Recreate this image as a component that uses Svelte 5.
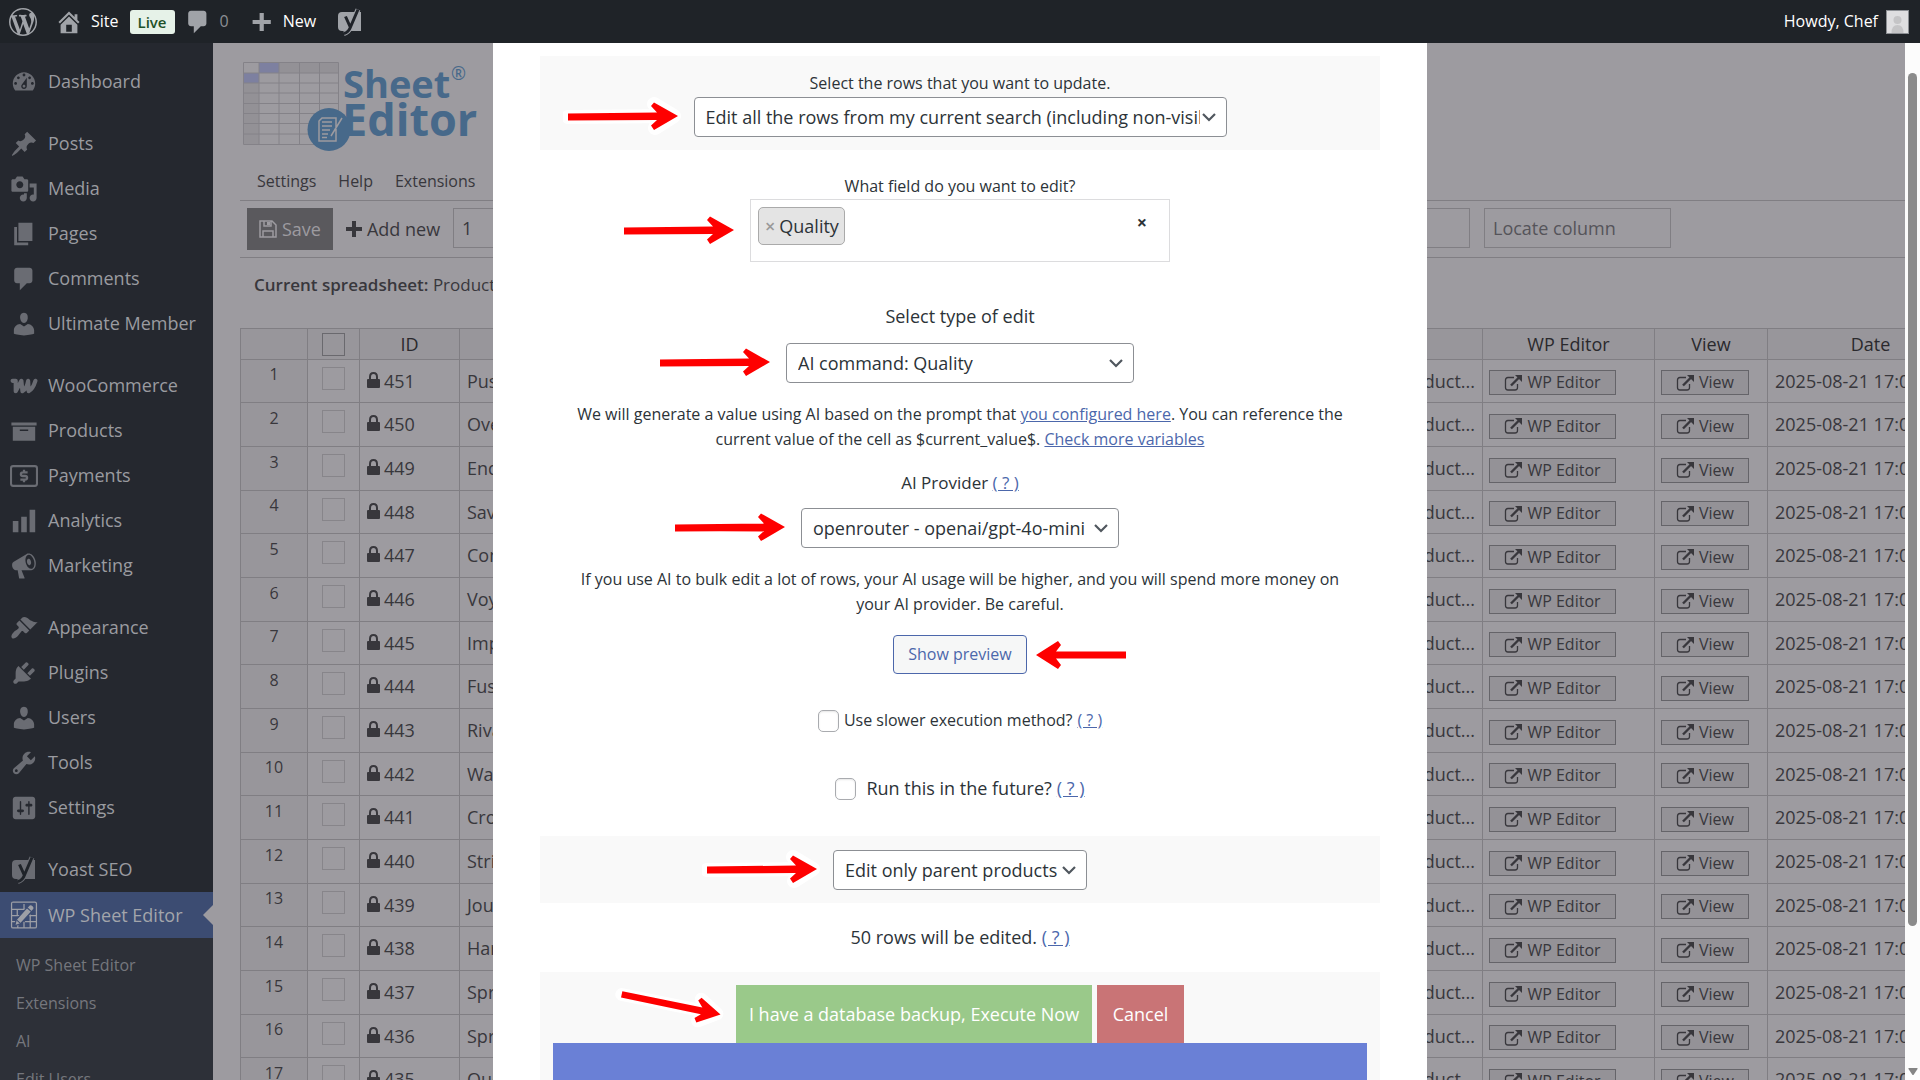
<script lang="ts">
	const icons: Record<string, string> = {
		wordpress:
			'M20 10c0-5.51-4.49-10-10-10C4.48 0 0 4.49 0 10c0 5.52 4.48 10 10 10 5.51 0 10-4.48 10-10zM7.78 15.37L4.37 6.22c.55-.02 1.17-.08 1.17-.08.5-.06.44-1.13-.06-1.11 0 0-1.45.11-2.37.11-.18 0-.37 0-.58-.01C4.12 2.69 6.87 1.11 10 1.11c2.33 0 4.45.87 6.05 2.34-.68-.11-1.65.39-1.65 1.58 0 .74.45 1.36.9 2.1.35.61.55 1.36.55 2.46 0 1.49-1.4 5-1.4 5l-3.03-8.37c.54-.02.82-.17.82-.17.5-.05.44-1.25-.06-1.22 0 0-1.44.12-2.38.12-.87 0-2.33-.12-2.33-.12-.5-.03-.56 1.2-.06 1.22l.92.08 1.26 3.41zM17.41 10c.24-.64.74-1.87.43-4.25.7 1.29 1.05 2.71 1.05 4.25 0 3.29-1.73 6.24-4.4 7.78.97-2.59 1.94-5.2 2.92-7.78zM6.1 18.09C3.12 16.65 1.11 13.53 1.11 10c0-1.3.23-2.48.72-3.59C3.25 10.3 4.67 14.2 6.1 18.09zm4.03-6.63l2.58 6.98c-.86.29-1.76.45-2.71.45-.79 0-1.57-.11-2.29-.33.81-2.38 1.62-4.74 2.42-7.1z',
		home: 'M16 8.5l1.53 1.53-1.06 1.06L10 4.6l-6.47 6.49-1.06-1.06L10 2.5l4 4v-2h2v4zm-6-2.46l6 5.99V18H4v-5.97zM12 17v-5H8v5h4z',
		plus: 'M17 8.500v3h-5v5H9v-5H4V8.500h5V3.500h3v5h5z',
		dashboard:
			'M3.76 16h12.48c1.1-1.37 1.76-3.11 1.76-5 0-4.42-3.58-8-8-8s-8 3.58-8 8c0 1.89.66 3.63 1.76 5zM10 4c.55 0 1 .45 1 1s-.45 1-1 1-1-.45-1-1 .45-1 1-1zM6 6c.55 0 1 .45 1 1s-.45 1-1 1-1-.45-1-1 .45-1 1-1zm8 0c.55 0 1 .45 1 1s-.45 1-1 1-1-.45-1-1 .45-1 1-1zm-5.37 5.55L12 7v6c0 1.1-.9 2-2 2s-2-.9-2-2c0-.57.24-1.08.63-1.45zM4 10c.55 0 1 .45 1 1s-.45 1-1 1-1-.45-1-1 .45-1 1-1zm12 0c.55 0 1 .45 1 1s-.45 1-1 1-1-.45-1-1 .45-1 1-1zm-5 3c0-.55-.45-1-1-1s-1 .45-1 1 .45 1 1 1 1-.45 1-1z',
		pin: 'M10.44 3.02l1.82-1.82 6.36 6.35-1.83 1.82c-1.05-.68-2.48-.57-3.41.36l-.75.75c-.92.93-1.04 2.35-.35 3.41l-1.83 1.82-2.41-2.41-2.8 2.79c-.42.42-3.38 2.71-3.8 2.29s1.86-3.39 2.28-3.81l2.79-2.79L4.1 9.36l1.83-1.82c1.05.69 2.48.57 3.4-.36l.75-.75c.93-.92 1.05-2.35.36-3.41z',
		media:
			'M13 11V4c0-.55-.45-1-1-1h-1.67L9 1H5L3.67 3H2c-.55 0-1 .45-1 1v7c0 .55.45 1 1 1h10c.55 0 1-.45 1-1zM7 4.5c1.38 0 2.5 1.12 2.5 2.5S8.38 9.5 7 9.5 4.5 8.38 4.5 7 5.62 4.5 7 4.5zM14 6h5v10.5c0 1.38-1.12 2.5-2.5 2.5S14 17.88 14 16.5s1.12-2.5 2.5-2.5c.17 0 .34.02.5.05V9h-3V6zm-4 8.05V13h2v3.5c0 1.38-1.12 2.5-2.5 2.5S7 17.88 7 16.5 8.12 14 9.5 14c.17 0 .34.02.5.05z',
		page: 'M6 15V2h10v13H6zm-1 1h8v2H3V5h2v11z',
		comment: 'M5 2h9c1.1 0 2 .9 2 2v7c0 1.1-.9 2-2 2h-2l-5 5v-5H5c-1.1 0-2-.9-2-2V4c0-1.1.9-2 2-2z',
		user: 'M10 9.25c-2.27 0-2.73-3.44-2.73-3.44C7 4.02 7.82 2 9.97 2c2.16 0 2.98 2.02 2.71 3.81 0 0-.41 3.44-2.68 3.44zm0 2.57L12.72 10c2.39 0 4.52 2.33 4.52 4.53v2.49s-3.65 1.13-7.24 1.13c-3.65 0-7.24-1.13-7.24-1.13v-2.49c0-2.25 1.94-4.48 4.47-4.48z',
		archive: 'M19 4v2H1V4h18zM2 7h16v10H2V7zm11 3V9H7v1h6z',
		chart: 'M18 18V2h-4v16h4zm-6 0V7H8v11h4zm-6 0v-8H2v8h4z',
		megaphone:
			'M18.15 5.94c.46 1.62.38 3.22-.02 4.48-.42 1.28-1.26 2.18-2.3 2.48-.16.06-.26.06-.4.06-.06.02-.12.02-.18.02-.06.02-.14.02-.22.02h-6.8l2.22 5.5c.02.14-.06.26-.14.34-.08.1-.24.16-.34.16H6.95c-.1 0-.26-.06-.34-.16-.08-.08-.16-.2-.14-.34l-1-5.5H4.25l-.02-.02c-.5.06-1.08-.18-1.54-.62s-.88-1.08-1.06-1.88c-.24-.8-.2-1.56-.02-2.2.18-.62.58-1.08 1.06-1.3l.02-.02 9-5.4c.1-.06.18-.1.24-.16.06-.04.14-.08.24-.12.16-.08.28-.12.5-.18 1.04-.3 2.24.1 3.22.98s1.84 2.24 2.26 3.86zm-2.58 5.98h-.02c.4-.1.74-.34 1.04-.7.58-.7.86-1.76.86-3.04 0-.64-.1-1.3-.28-1.98-.34-1.36-1.02-2.5-1.78-3.24s-1.68-1.1-2.46-.88c-.82.22-1.4.96-1.7 2-.32 1.04-.28 2.36.06 3.72.38 1.36 1 2.5 1.8 3.24.78.74 1.62 1.1 2.48.88zm-2.54-7.08c.22-.04.42-.02.62.04.38.16.76.48 1.02 1s.42 1.2.42 1.78c0 .3-.04.56-.12.8-.18.48-.44.84-.86.94-.34.1-.8-.06-1.14-.4s-.64-.86-.78-1.5c-.18-.62-.12-1.24.02-1.72s.48-.84.82-.94z',
		brush:
			'M14.48 11.06L7.41 3.99l1.5-1.5c.5-.56 2.3-.47 3.51.32 1.21.8 1.43 1.28 2.91 2.1 1.18.64 2.45 1.26 4.45.85zm-.71.71L6.7 4.7 4.93 6.47c-.39.39-.39 1.02 0 1.41l1.06 1.06c.39.39.39 1.03 0 1.42-.6.6-1.43 1.11-2.21 1.69-.35.26-.7.53-1.01.84C1.43 14.23.4 16.08 1.4 17.07c.99 1 2.84-.03 4.18-1.36.31-.31.58-.66.85-1.02.57-.78 1.08-1.61 1.69-2.21.39-.39 1.02-.39 1.41 0l1.06 1.06c.39.39 1.02.39 1.41 0z',
		plug: 'M13.11 4.36L9.87 7.6 8 5.73l3.24-3.24c.35-.34 1.05-.2 1.56.32.52.51.66 1.21.31 1.55zm-8 1.77l.91-1.12 9.01 9.01-1.19.84c-.71.71-2.63 1.16-3.82 1.16H6.14L4.9 17.26c-.59.59-1.54.59-2.12 0-.59-.58-.59-1.53 0-2.12l1.24-1.24v-3.88c0-1.13.4-3.19 1.09-3.89zm7.26 3.97l3.24-3.24c.34-.35 1.04-.21 1.55.31.52.51.66 1.21.31 1.55l-3.24 3.25z',
		wrench:
			'M16.68 9.77c-1.34 1.34-3.3 1.67-4.95.99l-5.41 6.52c-.99.99-2.59.99-3.58 0s-.99-2.59 0-3.57l6.52-5.42c-.68-1.65-.35-3.61.99-4.95 1.28-1.28 3.12-1.62 4.72-1.06l-2.89 2.89 2.82 2.82 2.86-2.87c.53 1.58.18 3.39-1.08 4.65zM3.81 16.21c.4.39 1.04.39 1.43 0 .4-.4.4-1.04 0-1.43-.39-.4-1.03-.4-1.43 0-.39.39-.39 1.03 0 1.43z',
		sliders:
			'M18 16V4c0-1.1-.9-2-2-2H4c-1.1 0-2 .9-2 2v12c0 1.1.9 2 2 2h12c1.1 0 2-.9 2-2zM8 11h1c.55 0 1 .45 1 1s-.45 1-1 1H8v1.5c0 .28-.22.5-.5.5s-.5-.22-.5-.5V13H6c-.55 0-1-.45-1-1s.45-1 1-1h1V5.5c0-.28.22-.5.5-.5s.5.22.5.5V11zm5-2h-1c-.55 0-1-.45-1-1s.45-1 1-1h1V5.5c0-.28.22-.5.5-.5s.5.22.5.5V7h1c.55 0 1 .45 1 1s-.45 1-1 1h-1v5.5c0 .28-.22.5-.5.5s-.5-.22-.5-.5V9z'
	};

	// Sidebar menu, split where WordPress puts its separators
	const menu = [
		[{ label: 'Dashboard', icon: 'dashboard' }],
		[
			{ label: 'Posts', icon: 'pin' },
			{ label: 'Media', icon: 'media' },
			{ label: 'Pages', icon: 'page' },
			{ label: 'Comments', icon: 'comment' },
			{ label: 'Ultimate Member', icon: 'user' }
		],
		[
			{ label: 'WooCommerce', icon: 'woo' },
			{ label: 'Products', icon: 'archive' },
			{ label: 'Payments', icon: 'dollar' },
			{ label: 'Analytics', icon: 'chart' },
			{ label: 'Marketing', icon: 'megaphone' }
		],
		[
			{ label: 'Appearance', icon: 'brush' },
			{ label: 'Plugins', icon: 'plug' },
			{ label: 'Users', icon: 'user' },
			{ label: 'Tools', icon: 'wrench' },
			{ label: 'Settings', icon: 'sliders' }
		],
		[
			{ label: 'Yoast SEO', icon: 'yoast' },
			{ label: 'WP Sheet Editor', icon: 'sheet', current: true }
		]
	];
	const submenu = ['WP Sheet Editor', 'Extensions', 'AI', 'Edit Users'];

	const titles = [
		'Push It Messenger Bag',
		'Overnight Duffle',
		'Endeavor Daytrip Backpack',
		'Savvy Shoulder Tote',
		'Compete Track Tote',
		'Voyage Yoga Bag',
		'Impulse Duffle',
		'Fusion Backpack',
		'Rival Field Messenger',
		'Wayfarer Messenger Bag',
		'Crown Summit Backpack',
		'Strive Shoulder Pack',
		'Joust Duffle Bag',
		'Harmony Strength Kit',
		'Sprite Stasis Ball',
		'Sprite Foam Roller',
		'Quest Lumaflex Band'
	];
	const rows = titles.map((title, i) => ({ id: 451 - i, title }));

	let slower = $state(false);
	let future = $state(false);
</script>

{#snippet icon(name: string)}
	{#if name === 'yoast'}
		<svg class="icon yoast" viewBox="0 0 24 28" aria-hidden="true">
			<path fill="currentColor" d="M4 4h19v19H4a4 4 0 0 1-4-4V8a4 4 0 0 1 4-4z" />
			<path class="y-edge" d="M20 1.500L12.500 19Q10.500 24.500 6 25.500" />
			<path class="y-ink" d="M20 1.500L12.500 19Q10.500 24.500 6 25.500M7.500 8.500L12 18.500" />
		</svg>
	{:else if name === 'woo'}
		<svg class="icon" viewBox="0 0 27 18" aria-hidden="true">
			<path
				d="M2.500 4H5.500L5.500 14L11 4L12 14Q16 12 17.500 4L18 14Q22 12 24.500 4"
				fill="none"
				stroke="currentColor"
				stroke-width="4"
				stroke-linejoin="round"
				stroke-linecap="round"
			/>
		</svg>
	{:else if name === 'dollar'}
		<svg class="icon" viewBox="0 0 27 21" aria-hidden="true">
			<rect x="1" y="1" width="25" height="19" rx="2" fill="none" stroke="currentColor" stroke-width="2" />
			<path
				d="M17 7H12.500Q10.500 7 10.500 8.700T12.500 10.500H14.500Q16.500 10.500 16.500 12.300T14.500 14H10M13.500 4.500V7M13.500 14V16.500"
				fill="none"
				stroke="currentColor"
				stroke-width="2.200"
			/>
		</svg>
	{:else if name === 'sheet'}
		<svg class="icon" viewBox="0 0 26 27" aria-hidden="true">
			<path
				d="M2.500 1h21q1.500 0 1.500 1.500v22q0 1.500-1.500 1.500h-21Q1 26 1 24.500v-22Q1 1 2.500 1zM1 8h16M1 14h10M18 14h7M1 20h6M14 20h11M6.500 8v6M13 20v6M19 13v13M7 22v4M13 3v5"
				fill="none"
				stroke="currentColor"
				stroke-width="1.200"
			/>
			<path d="M4 24L5.500 18L18 4Q19.500 2.500 21.500 4.500T22.500 8L9.500 22z" fill="currentColor" stroke="#3c4c72" stroke-width="1.200" />
			<path d="M16 6.500L20.500 10.500M6 18.500L9.500 21.500" stroke="#3c4c72" />
		</svg>
	{:else}
		<svg class="icon" viewBox="0 0 20 20" aria-hidden="true">
			<path d={icons[name]} fill="currentColor" fill-rule="evenodd" />
		</svg>
	{/if}
{/snippet}

{#snippet external()}
	<svg class="external" viewBox="0 0 18 16" aria-hidden="true">
		<path d="M10 2.500H4Q1.500 2.500 1.500 5v7.500Q1.500 15 4 15h7q2.500 0 2.500-2.500V9" fill="none" stroke="currentColor" stroke-width="1.300" />
		<path d="M7 10.500L15 2.500" stroke="currentColor" stroke-width="2.400" />
		<path d="M11 0h7v7z" fill="currentColor" />
	</svg>
{/snippet}

{#snippet chevron()}
	<svg class="chevron" viewBox="0 0 14 9" aria-hidden="true">
		<path d="M1 1l6 6 6-6" fill="none" stroke="#50575e" stroke-width="2.200" />
	</svg>
{/snippet}

<!-- Red pointers, kept next to the control that they point at -->
{#snippet pointer(kind = 'right')}
	<svg class="pointer {kind}" viewBox="0 0 120 40" aria-hidden="true">
		<g class="halo">
			<path d={kind === 'left' ? 'M95 20H10M26 9L9 20L26 31' : 'M5 21L109 20M91 8L111 20L92 32'} />
		</g>
		{#if kind === 'left'}
			<path d="M97 16.500V23.500H27L32 30L29 34L7 20L29 6L32 10L27 16.500z" fill="#fe0000" />
		{:else}
			<path d="M5 17.500L94 16.500L88 10L91 6.500L115 20L91 34L88 29.500L94 24L5 24.500z" fill="#fe0000" />
		{/if}
	</svg>
{/snippet}

<div class="screen">
	<header class="adminbar">
		<a href="#about" aria-label="About WordPress">{@render icon('wordpress')}</a>
		<a href="#site" class="site">{@render icon('home')}Site</a>
		<span class="live">Live</span>
		<a href="#comments" class="count">{@render icon('comment')}0</a>
		<a href="#new" class="new">{@render icon('plus')}New</a>
		<a href="#yoast" aria-label="Yoast SEO">{@render icon('yoast')}</a>
		<a href="#profile" class="howdy">
			Howdy, Chef
			<svg viewBox="0 0 23 24" aria-hidden="true">
				<rect x=".5" y=".5" width="22" height="23" fill="#dedee0" stroke="#8c8f94" />
				<circle cx="11.500" cy="10" r="4" fill="#c4c4c6" />
				<path d="M5.500 23q0-8 6-8t6 8z" fill="#c4c4c6" />
			</svg>
		</a>
	</header>

	<div class="workspace">
		<nav class="sidebar">
			{#each menu as group, g (g)}
				<ul>
					{#each group as item (item.label)}
						<li>
							<a href="#menu" class:current={'current' in item}>
								{@render icon(item.icon)}{item.label}
							</a>
						</li>
					{/each}
				</ul>
			{/each}
			<ul class="submenu">
				{#each submenu as label (label)}
					<li><a href="#submenu">{label}</a></li>
				{/each}
			</ul>
		</nav>

		<main class="sheet">
			<svg class="logo" viewBox="0 0 240 90" role="img" aria-label="Sheet Editor">
				<rect x="1" y="1" width="95" height="10" fill="#939196" />
				<rect x="1" y="1" width="15" height="81" fill="#939196" />
				<rect x="1" y="1" width="15" height="10" fill="#9d9ba0" />
				<rect x="16" y="1" width="20" height="10" fill="#7d80a0" />
				<rect x="1" y="11" width="15" height="10" fill="#7d80a0" />
				<path
					d="M.5.5h95v82H.5zM.5 11h95M.5 21h95M.5 31h95M.5 41.500h95M.5 51.500h95M.5 61.500h95M.5 72h95M16 .5v82M36 .5v82M56.500 .5v82M76.500 .5v82"
					fill="none"
					stroke="#848288"
				/>
				<circle cx="86" cy="67.500" r="21.500" fill="#47698a" />
				<path
					d="M79 56h14v23H76V59zM79 60h10M79 64h10M79 68h8M79 72h6M79 75.500h5M99 56L88 74"
					fill="none"
					stroke="#9d9ba0"
					stroke-width="1.500"
				/>
				<text x="100" y="36" font-size="38">Sheet</text>
				<text x="99" y="74" font-size="45">Editor</text>
				<text class="reg" x="208" y="18" font-size="18">®</text>
			</svg>

			<div class="links">
				<a href="#settings">Settings</a>
				<a href="#help">Help</a>
				<a href="#extensions">Extensions</a>
			</div>

			<div class="toolbar">
				<button class="save">
					<svg viewBox="0 0 18 18" aria-hidden="true">
						<path d="M1 1h12l4 4v12H1zM5 1v5h7V1M4 17v-6h10v6" fill="none" stroke="currentColor" stroke-width="1.500" />
						<path d="M8 2h3v3H8z" fill="currentColor" />
					</svg>
					Save
				</button>
				<button class="add">
					<svg viewBox="0 0 16 16" aria-hidden="true"><path d="M8 0v16M0 8h16" stroke="currentColor" stroke-width="4" /></svg>
					Add new
				</button>
				<input class="amount" type="text" value="1" aria-label="Number of rows" />
				<input class="locate" type="text" placeholder="Locate column" aria-label="Locate column" />
			</div>

			<p class="current-sheet"><b>Current spreadsheet:</b> Products</p>

			<div class="grid">
				<table>
					<colgroup>
						<col class="c-num" /><col class="c-check" /><col class="c-id" /><col /><col class="c-type" />
						<col class="c-editor" /><col class="c-view" /><col class="c-date" />
					</colgroup>
					<thead>
						<tr>
							<th></th>
							<th><input type="checkbox" aria-label="Select all rows" /></th>
							<th>ID</th>
							<th></th>
							<th></th>
							<th>WP Editor</th>
							<th>View</th>
							<th>Date</th>
						</tr>
					</thead>
					<tbody>
						{#each rows as row, i (row.id)}
							<tr>
								<td class="num">{i + 1}</td>
								<td class="check"><input type="checkbox" aria-label="Select row {row.id}" /></td>
								<td class="id">
									<svg viewBox="0 0 13 16" aria-hidden="true">
										<path d="M3 8V5q0-4 3.500-4T10 5v3" fill="none" stroke="currentColor" stroke-width="2" />
										<rect y="7" width="13" height="9" rx="1" fill="currentColor" />
									</svg>{row.id}
								</td>
								<td>{row.title}</td>
								<td class="type">Simple product...</td>
								<td class="action"><button class="w-editor">{@render external()}WP Editor</button></td>
								<td class="action"><button class="w-view">{@render external()}View</button></td>
								<td>2025-08-21 17:00:14</td>
							</tr>
						{/each}
					</tbody>
				</table>
			</div>
		</main>

		<div class="scrollbar">
			<div class="thumb"></div>
			<svg viewBox="0 0 10 8" aria-hidden="true"><path d="M1 0h8q1 0 .5 1L5.500 7h-1L.5 1Q0 0 1 0z" fill="#858585" /></svg>
		</div>

		<div class="overlay">
			<form class="modal">
				<section class="band rows">
					<label for="rows">Select the rows that you want to update.</label>
					<div class="anchor">
						{@render pointer()}
						<select id="rows" class="w-rows">
							<option>Edit all the rows from my current search (including non-visible)</option>
						</select>
						{@render chevron()}
					</div>
				</section>

				<label class="field-label" for="field">What field do you want to edit?</label>
				<div class="anchor">
					{@render pointer()}
					<div class="tags">
						<span class="tag"><button type="button" aria-label="Remove Quality">×</button>Quality</span>
						<input id="field" type="text" />
						<button type="button" class="clear" aria-label="Clear">×</button>
					</div>
				</div>

				<label class="type-label" for="type">Select type of edit</label>
				<div class="anchor">
					{@render pointer()}
					<select id="type" class="w-type"><option>AI command: Quality</option></select>
					{@render chevron()}
				</div>

				<p>
					We will generate a value using AI based on the prompt that <a href="#configured">you configured here</a>.
					You can reference the current value of the cell as $current_value$.
					<a href="#variables">Check more variables</a>
				</p>

				<div class="provider-label">
					<label for="provider">AI Provider</label> <a href="#help-provider">( ? )</a>
				</div>
				<div class="anchor">
					{@render pointer()}
					<select id="provider" class="w-provider"><option>openrouter - openai/gpt-4o-mini</option></select>
					{@render chevron()}
				</div>

				<p>
					If you use AI to bulk edit a lot of rows, your AI usage will be higher, and you will spend more money on
					your AI provider. Be careful.
				</p>

				<div class="anchor preview">
					<button type="button">Show preview</button>
					{@render pointer('left')}
				</div>

				<div class="option slower">
					<input id="slower" type="checkbox" bind:checked={slower} />
					<label for="slower">Use slower execution method?</label>
					<a href="#help-slower">( ? )</a>
				</div>
				<div class="option future">
					<input id="future" type="checkbox" bind:checked={future} />
					<label for="future">Run this in the future?</label>
					<a href="#help-future">( ? )</a>
				</div>

				<section class="band products">
					<div class="anchor">
						{@render pointer()}
						<select class="w-products" aria-label="Products to edit"><option>Edit only parent products</option></select>
						{@render chevron()}
					</div>
				</section>

				<div class="total">50 rows will be edited. <a href="#help-total">( ? )</a></div>

				<section class="band actions">
					<div class="anchor buttons">
						{@render pointer('down')}
						<button type="button" class="execute">I have a database backup, Execute Now</button>
						<button type="button" class="cancel">Cancel</button>
					</div>
					<div class="progress"></div>
				</section>
			</form>
		</div>
	</div>
</div>

<style>
	:global(body) {
		margin: 0;
		overflow: hidden;
	}

	.screen {
		--body: 16px;
		--medium: 17px;
		--large: 18px;
		display: flex;
		flex-direction: column;
		height: 100vh;
		font-family: 'Open Sans', 'Noto Sans', sans-serif;
		font-size: var(--body);
		line-height: 25px;
		color: #2c3338;
	}
	.screen * {
		box-sizing: border-box;
	}
	button,
	input,
	select {
		font: inherit;
		color: inherit;
		margin: 0;
	}
	ul {
		list-style: none;
		margin: 0;
		padding: 0;
	}
	svg {
		display: block;
		flex: none;
	}
	.icon {
		width: 28px;
		height: 28px;
	}
	.y-edge,
	.y-ink {
		fill: none;
		stroke: currentColor;
		stroke-width: 5;
	}
	.y-ink {
		stroke: #1f2329;
		stroke-width: 3;
	}

	/* Admin bar */
	.adminbar {
		display: flex;
		align-items: center;
		height: 43px;
		padding: 0 11px 0 9px;
		background: #1f2328;
		color: #fff;
	}
	.adminbar a {
		display: flex;
		align-items: center;
		gap: 8px;
		color: inherit;
		text-decoration: none;
	}
	.adminbar .icon {
		color: #a0a3a8;
	}
	.adminbar .site {
		margin-left: 18px;
	}
	.live {
		margin: 0 9px 0 11px;
		padding: 0 8px;
		line-height: 24px;
		border-radius: 3px;
		background: #e6f2e8;
		color: #1d5128;
		font-weight: 600;
		font-size: 15px;
	}
	.adminbar .count {
		color: #8c8f94;
		margin-right: 18px;
	}
	.adminbar .new {
		margin-right: 20px;
	}
	.adminbar .howdy {
		margin-left: auto;
	}
	.howdy svg {
		width: 23px;
		height: 24px;
	}

	.workspace {
		position: relative;
		flex: 1;
		min-height: 0;
		display: grid;
		grid-template-columns: 213px minmax(0, 1fr) 15px;
		overflow: hidden;
	}

	/* Sidebar */
	.sidebar {
		padding-top: 16px;
		background: #25282f;
		color: #9a9ba0;
		font-size: var(--large);
		overflow: hidden;
	}
	.sidebar ul + ul:not(.submenu) {
		margin-top: 17px;
	}
	.sidebar a {
		display: flex;
		align-items: center;
		gap: 10px;
		height: 45px;
		padding-left: 10px;
		color: inherit;
		text-decoration: none;
		white-space: nowrap;
	}
	.sidebar .icon {
		color: #6a6c73;
	}
	.sidebar a.current {
		position: relative;
		height: 46px;
		background: #3c4c72;
		color: #a3a5ab;
	}
	.sidebar a.current .icon {
		color: #9d9fa6;
	}
	.current::after {
		content: '';
		position: absolute;
		right: 0;
		top: 13px;
		border: 10px solid transparent;
		border-left: 0;
		border-right-color: #9d9ba0;
	}
	.submenu {
		padding: 8px 0;
		background: #2d3038;
		color: #75777d;
		font-size: var(--body);
	}
	.submenu a {
		height: 38px;
		padding-left: 16px;
	}

	/* Spreadsheet page */
	.sheet {
		padding: 19px 0 0 27px;
		background: #9d9ba0;
		color: #38373c;
		overflow: hidden;
	}
	.logo {
		width: 240px;
		height: 90px;
		margin-left: 3px;
	}
	.logo text {
		font-weight: 700;
		fill: #47698a;
	}
	.logo .reg {
		font-weight: 400;
	}
	.links {
		display: flex;
		gap: 22px;
		padding: 17px 17px 6px;
		border-bottom: 1px solid #807e83;
	}
	.links a {
		color: inherit;
		text-decoration: none;
	}
	.toolbar {
		display: flex;
		align-items: flex-start;
		padding: 7px;
		border-bottom: 1px solid #807e83;
	}
	.toolbar button {
		display: flex;
		align-items: center;
		justify-content: center;
		gap: 5px;
		height: 42px;
		padding: 0;
		border: 0;
		background: none;
		font-size: var(--large);
	}
	.toolbar .save {
		width: 86px;
		background: #5a595d;
		color: #9d9ba0;
	}
	.save svg {
		width: 18px;
		height: 18px;
	}
	.toolbar .add {
		width: 120px;
	}
	.add svg {
		width: 16px;
		height: 16px;
	}
	.toolbar input {
		height: 40px;
		padding: 0 8px;
		border: 1px solid #807e83;
		background: transparent;
		font-size: var(--large);
		outline: 0;
	}
	.toolbar .amount {
		flex: 1;
	}
	.toolbar .locate {
		width: 187px;
		margin: 0 227px 0 14px;
	}
	.locate::placeholder {
		color: #55545a;
		opacity: 1;
	}
	.current-sheet {
		margin: 0;
		padding: 14px 14px 31px;
		font-size: var(--medium);
	}
	.current-sheet b {
		font-weight: 600;
	}
	.grid {
		overflow: hidden;
	}
	table {
		width: calc(100% + 69px);
		table-layout: fixed;
		border-collapse: collapse;
		font-size: var(--large);
	}
	.c-num {
		width: 67px;
	}
	.c-check {
		width: 52px;
	}
	.c-id {
		width: 100px;
	}
	.c-type {
		width: 250px;
	}
	.c-editor {
		width: 172px;
	}
	.c-view {
		width: 113px;
	}
	.c-date {
		width: 206px;
	}
	th,
	td {
		padding: 0 7px;
		border: 1px solid #807e83;
		text-align: left;
		white-space: nowrap;
	}
	th {
		height: 31px;
		background: #98969b;
		color: #2a292d;
		font-weight: 400;
		text-align: center;
	}
	tbody tr {
		height: 44px;
	}
	tbody tr:nth-child(3n + 1) {
		height: 43px;
	}
	th input,
	.check input {
		appearance: none;
		display: block;
		width: 23px;
		height: 23px;
		margin: auto;
		border: 1px solid #87858a;
		background: transparent;
	}
	th input {
		border-color: #6a696e;
	}
	.num {
		padding-bottom: 13px;
		background: #98969b;
		font-size: var(--body);
		text-align: center;
	}
	.check {
		padding-bottom: 6px;
	}
	.id svg {
		display: inline-block;
		width: 13px;
		height: 16px;
		margin-right: 4px;
	}
	.type {
		text-align: right;
	}
	.action {
		padding: 3px 6px 0;
	}
	td button {
		display: flex;
		align-items: center;
		justify-content: center;
		gap: 5px;
		height: 25px;
		padding: 0;
		border: 1px solid #656469;
		background: #949297;
		font-size: var(--body);
	}
	.w-editor {
		width: 127px;
	}
	.w-view {
		width: 88px;
	}
	.external {
		width: 18px;
		height: 16px;
	}

	/* Window scrollbar */
	.scrollbar {
		display: flex;
		flex-direction: column;
		align-items: center;
		padding: 30px 0 4px;
		background: #fcfcfc;
	}
	.thumb {
		width: 9px;
		height: 85%;
		border-radius: 5px;
		background: #8b8b8b;
	}
	.scrollbar svg {
		width: 10px;
		height: 8px;
		margin-top: auto;
	}

	/* Bulk edit modal */
	.overlay {
		position: absolute;
		inset: 0;
		display: flex;
		justify-content: center;
		pointer-events: none;
	}
	.modal {
		display: flex;
		flex-direction: column;
		align-items: center;
		width: 934px;
		max-width: 90%;
		padding: 13px 47px 0;
		background: #fff;
		text-align: center;
		overflow: hidden;
		pointer-events: auto;
	}
	.modal a {
		color: #4c67ab;
	}
	.modal p {
		margin: 19px 0 18px;
		padding: 0 24px;
	}
	.modal select {
		appearance: none;
		display: block;
		height: 40px;
		padding: 0 26px 0 11px;
		border: 1px solid #8c8f94;
		border-radius: 4px;
		background: #fff;
		font-size: var(--large);
	}
	.w-rows {
		width: 533px;
	}
	.w-type {
		width: 348px;
	}
	.w-provider {
		width: 318px;
	}
	.w-products {
		width: 254px;
	}
	.anchor {
		position: relative;
	}
	.chevron {
		position: absolute;
		right: 11px;
		top: 16px;
		width: 14px;
		height: 9px;
		pointer-events: none;
	}
	.pointer {
		position: absolute;
		right: 100%;
		top: 50%;
		width: 120px;
		height: 40px;
		margin: -21px 11px 0 0;
	}
	.pointer.left {
		right: auto;
		left: 100%;
		margin: -20px 0 0 2px;
	}
	.pointer.down {
		width: 110px;
		height: 37px;
		margin-top: -17px;
		transform: rotate(12deg);
		transform-origin: right;
		overflow: visible;
	}
	.halo {
		fill: none;
		stroke: #fff;
		stroke-width: 14;
		stroke-linejoin: round;
		stroke-linecap: round;
	}

	.band {
		display: flex;
		flex-direction: column;
		align-items: center;
		align-self: stretch;
		background: #f9f9f9;
	}
	.band.rows {
		gap: 1px;
		padding: 15px 0 13px;
	}
	.field-label {
		margin-top: 24px;
	}
	.tags {
		display: flex;
		align-items: flex-start;
		width: 420px;
		height: 63px;
		padding: 7px;
		border: 1px solid #dcdcde;
		background: #fff;
	}
	.tags button {
		padding: 0;
		border: 0;
		background: none;
	}
	.tag {
		display: flex;
		align-items: center;
		gap: 4px;
		height: 38px;
		padding: 0 5px 0 6px;
		border: 1px solid #aaa;
		border-radius: 5px;
		background: #e4e4e4;
		font-size: var(--large);
	}
	.tag button {
		color: #999;
		font-weight: 600;
	}
	.tags input {
		flex: 1;
		min-width: 0;
		border: 0;
		outline: 0;
	}
	.tags .clear {
		margin: 3px 15px 0 0;
		font-weight: 700;
		font-size: var(--large);
	}
	.type-label {
		margin: 42px 0 14px;
		font-size: var(--large);
	}
	.provider-label {
		margin-bottom: 13px;
		font-size: var(--medium);
	}
	.preview button {
		display: block;
		width: 134px;
		height: 39px;
		padding: 0;
		border: 1px solid #4c67ab;
		border-radius: 4px;
		background: #f6f7f7;
		color: #4c67ab;
	}
	.option {
		display: flex;
		align-items: center;
		gap: 5px;
	}
	.slower {
		margin: 34px 0 43px;
	}
	.future {
		margin-bottom: 35px;
		font-size: var(--large);
	}
	.option input {
		appearance: none;
		width: 21px;
		height: 22px;
		border: 1px solid #a9abaf;
		border-radius: 5px;
		background: #fff;
		box-shadow: inset 0 1px 2px rgba(0, 0, 0, 0.1);
	}
	.future input {
		margin-right: 5px;
	}
	.products {
		padding: 14px 0 13px;
	}
	.total {
		margin: 22px 0;
		font-size: var(--large);
	}
	.actions {
		flex: 1;
		padding: 13px 13px 0;
	}
	.buttons {
		display: flex;
		gap: 5px;
	}
	.buttons button {
		height: 58px;
		padding: 0;
		border: 0;
		color: #fff;
		font-size: var(--large);
	}
	.buttons .execute {
		width: 356px;
		background: #9ac98a;
	}
	.buttons .cancel {
		width: 87px;
		background: #c97476;
	}
	.progress {
		flex: 1;
		align-self: stretch;
		background: #6a80d6;
	}
</style>
